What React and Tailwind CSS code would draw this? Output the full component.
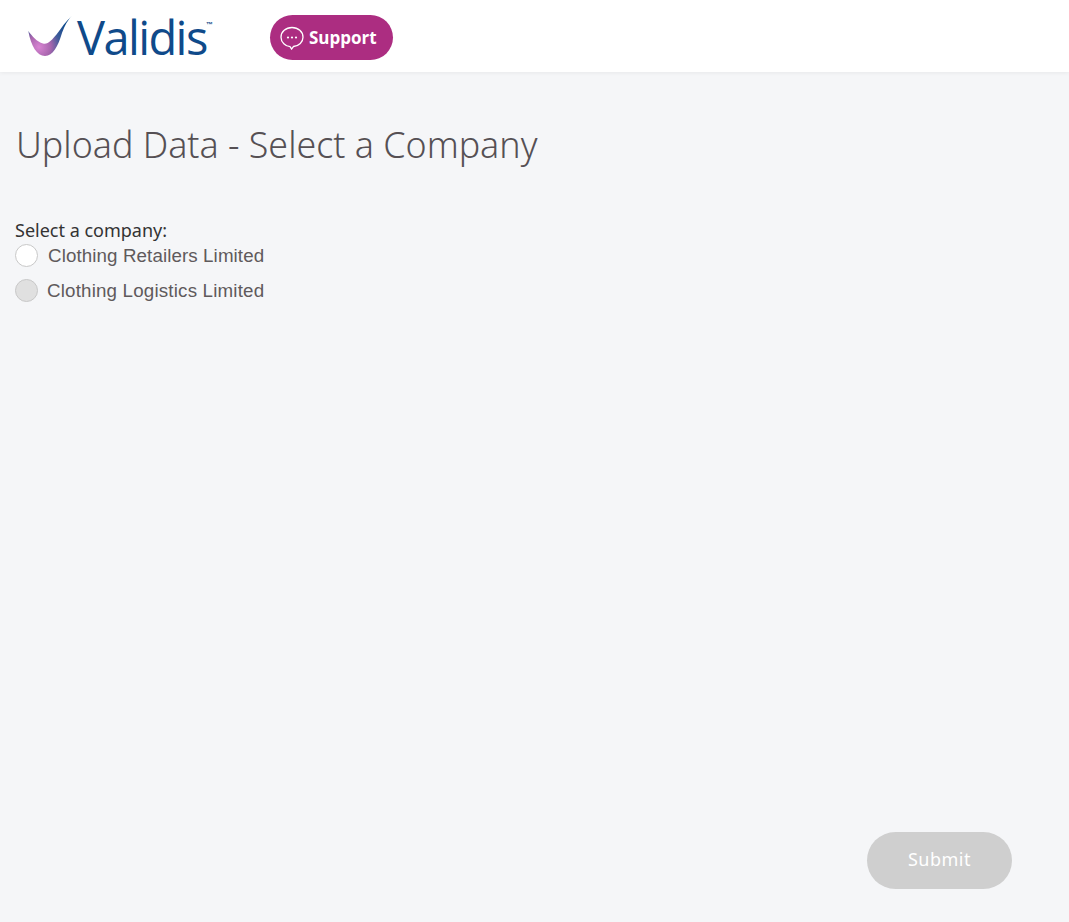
const sans = "font-['Noto_Sans',sans-serif]";

function Logo() {
  return (
    <div className="relative w-[186px] h-[44px] shrink-0">
      <svg className="absolute left-0 top-0" width="46" height="44" viewBox="0 0 46 44">
        <defs>
          <radialGradient id="sw" gradientUnits="userSpaceOnUse" cx="11" cy="31" r="34">
            <stop offset="0" stopColor="#d884d2" />
            <stop offset="0.35" stopColor="#a765ad" />
            <stop offset="0.62" stopColor="#3f5b9a" />
            <stop offset="1" stopColor="#0e4a8c" />
          </radialGradient>
        </defs>
        <path d="M0.3 15 C4 20 9 26 15 27.5 C20 28.7 24 24 28.7 18.3 C33 12.5 38 5 43.7 0 C38 6 35.5 13 33.5 18.5 C30 30 25 40 17 40 C9 40 3 30 0.3 15 Z" fill="url(#sw)" />
      </svg>
      <span className="absolute left-[49px] top-[-7px] font-['Open_Sans',sans-serif] font-medium text-[47px] leading-[56px] tracking-[-1.6px] text-[#0f4a8a]">Validis</span>
      <span className="absolute left-[178px] top-[6px] font-['Liberation_Sans',sans-serif] text-[7px] leading-[6px] font-bold text-[#0f4a8a]">™</span>
    </div>
  );
}

function Bubble() {
  return (
    <svg width="24" height="24" viewBox="0 0 24 24" fill="none" stroke="#fff" strokeWidth="1.3">
      <path d="M12 1.5 C5.8 1.5 1 5.8 1 11.2 C1 16.4 5.6 20.5 10 20.6 L11.6 23 L13.4 20.5 C19 20 23 16 23 11.2 C23 5.8 18.2 1.5 12 1.5 Z" />
      <circle cx="8" cy="11.5" r="1.1" fill="#fff" stroke="none" />
      <circle cx="12" cy="11.5" r="1.1" fill="#fff" stroke="none" />
      <circle cx="16" cy="11.5" r="1.1" fill="#fff" stroke="none" />
    </svg>
  );
}

function Radio({ label, disabled, cls, textCls }) {
  return (
    <label className={`flex items-center h-[34px] ${cls}`}>
      <span className={`w-[23px] h-[23px] rounded-full border border-[#c8c8c8] ${disabled ? "bg-[#e0e0e0]" : "bg-white"}`} />
      <span className={`font-['Liberation_Sans',sans-serif] text-[18.75px] text-[#5f5a5c] ${textCls}`}>{label}</span>
    </label>
  );
}

export default function App() {
  return (
    <div className="min-h-[922px] bg-[#f5f6f8] flex flex-col">
      <header className="h-[72px] bg-white flex items-center pl-[28px] pt-[3px] shadow-[0_1px_4px_rgba(0,0,0,0.06)]">
        <Logo />
        <button className="ml-[56px] w-[123px] h-[45px] rounded-full bg-[#ac2d81] flex items-center pl-[10px] gap-[5px]">
          <Bubble />
          <span className="font-['Open_Sans',sans-serif] font-bold text-[17px] text-white">Support</span>
        </button>
      </header>
      <main className="flex-1 flex flex-col pl-[15px] relative">
        <h1 className={`${sans} font-light text-[35.8px] leading-[48px] text-[#555054] mt-[48px] ml-[1px]`}>Upload Data - Select a Company</h1>
        <p className={`${sans} text-[18px] leading-[20px] text-[#333] mt-[52px]`}>Select a company:</p>
        <Radio label="Clothing Retailers Limited" cls="gap-[10px] mt-[-2px]" textCls="tracking-[0.1px] pt-[2px]" />
        <Radio label="Clothing Logistics Limited" disabled cls="gap-[9px] mt-[1px]" textCls="tracking-[0.18px] pt-[2px]" />
        <div className="flex-1" />
        <div className="flex justify-end pr-[57px] pb-[33px]">
          <button className={`${sans} w-[145px] h-[57px] pb-[2px] rounded-full bg-[#cfcfcf] text-white text-[18px] tracking-[0.5px]`}>Submit</button>
        </div>
      </main>
    </div>
  );
}
